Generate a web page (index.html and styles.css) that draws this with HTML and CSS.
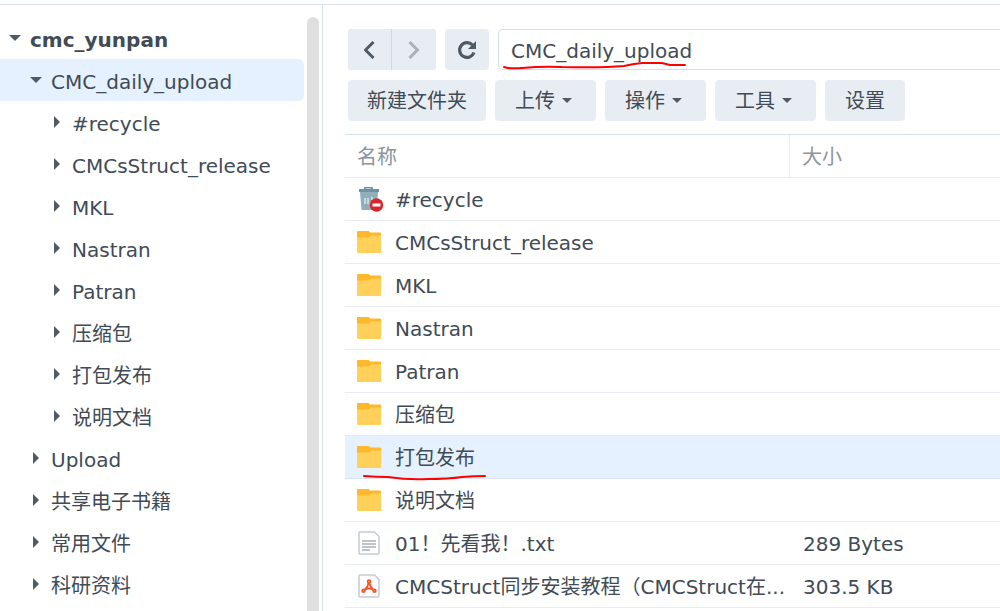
FILE: index.html
```html
<!DOCTYPE html>
<html lang="zh-CN">
<head>
<meta charset="utf-8">
<title>CMC_daily_upload</title>
<link rel="stylesheet" href="styles.css">
</head>
<body>
<svg class="defs" aria-hidden="true">
  <symbol id="folder" viewBox="0 0 24 22"><path fill="#fdb82b" d="M0 1Q0 0 1 0H11.500L13.500 1.500H23Q24 1.500 24 2.500V10H0Z"/><path fill="#ffd05a" d="M0 6.500H12L14 4.500H24V21Q24 22 23 22H1Q0 22 0 21Z"/></symbol>
  <symbol id="bin" viewBox="0 0 24 24" overflow="visible"><path fill="#8fafbb" d="M3 5H21L19.500 23H4.500Z"/><path fill="#6e94a3" d="M2 2H7V1Q7 0 8 0H15Q16 0 16 1V2H22V5H2ZM9 1.500V2H14V1.500Z"/><path stroke="#dbe7ec" stroke-width="1.500" d="M8 11V17M11 11V17M15 10V13"/><circle cx="19.500" cy="18" r="6.700" fill="#d9222a"/><rect x="15.500" y="16.500" width="8" height="3" fill="#fff"/></symbol>
  <symbol id="page" viewBox="0 0 22 24"><path fill="#fff" stroke="#c6cad0" stroke-width="1.500" stroke-linejoin="round" d="M2 1H16.500L21 5.500V22Q21 23 20 23H2Q1 23 1 22V2Q1 1 2 1Z"/></symbol>
  <symbol id="text-file" viewBox="0 0 22 24"><use href="#page"/><path stroke="#aab0b8" stroke-width="1.500" d="M4 10H18M4 13H18M4 16H18M4 19H12"/></symbol>
  <symbol id="pdf-file" viewBox="0 0 22 24"><use href="#page"/><g fill="none" stroke="#f4572b" stroke-width="1.800"><circle cx="11" cy="7.500" r="1.400"/><path d="M10.600 9Q10 13 6.500 16M11.400 9Q12 13 15.500 16M7 15.500Q11 13.500 15 15.500"/><circle cx="5.500" cy="16.800" r="1.300"/><circle cx="16.500" cy="16.800" r="1.300"/></g></symbol>
</svg>
<div class="app">
  <aside class="sidebar">
    <ul class="tree" role="tree">
      <li class="node level-0" role="treeitem" aria-expanded="true"><i class="arrow down"></i><span>cmc_yunpan</span></li>
      <li class="node level-1 selected" role="treeitem" aria-expanded="true" aria-selected="true"><i class="arrow down"></i><span>CMC_daily_upload</span></li>
      <li class="node level-2" role="treeitem"><i class="arrow"></i><span>#recycle</span></li>
      <li class="node level-2" role="treeitem"><i class="arrow"></i><span>CMCsStruct_release</span></li>
      <li class="node level-2" role="treeitem"><i class="arrow"></i><span>MKL</span></li>
      <li class="node level-2" role="treeitem"><i class="arrow"></i><span>Nastran</span></li>
      <li class="node level-2" role="treeitem"><i class="arrow"></i><span>Patran</span></li>
      <li class="node level-2" role="treeitem"><i class="arrow"></i><span>压缩包</span></li>
      <li class="node level-2" role="treeitem"><i class="arrow"></i><span>打包发布</span></li>
      <li class="node level-2" role="treeitem"><i class="arrow"></i><span>说明文档</span></li>
      <li class="node level-1" role="treeitem"><i class="arrow"></i><span>Upload</span></li>
      <li class="node level-1" role="treeitem"><i class="arrow"></i><span>共享电子书籍</span></li>
      <li class="node level-1" role="treeitem"><i class="arrow"></i><span>常用文件</span></li>
      <li class="node level-1" role="treeitem"><i class="arrow"></i><span>科研资料</span></li>
    </ul>
    <div class="scroll-thumb"></div>
  </aside>
  <main class="content">
    <div class="bar">
      <div class="history">
        <button type="button" class="button square" aria-label="后退"><svg width="12" height="18" viewBox="0 0 12 18"><path fill="none" stroke="#505a64" stroke-width="3" d="M9.500 1L1.500 9L9.500 17"/></svg></button>
        <button type="button" class="button square" aria-label="前进" disabled><svg width="12" height="18" viewBox="0 0 12 18"><path fill="none" stroke="#a9b1b9" stroke-width="3" d="M1.500 1L9.500 9L1.500 17"/></svg></button>
      </div>
      <button type="button" class="button square" aria-label="刷新"><svg width="20" height="20" viewBox="0 0 20 20"><path fill="none" stroke="#505a64" stroke-width="3.200" d="M15.500 5A7.400 7.400 0 1 0 17 12.500"/><path fill="#505a64" d="M19 1V9H11Z"/></svg></button>
      <div class="address">
        <input type="text" class="path" aria-label="路径" value="CMC_daily_upload">
        <svg class="mark path-mark" width="190" height="10" viewBox="0 0 190 10"><path d="M2 4Q8 6 20 5Q40 3 60 4Q100 5 122 3Q130 1 140 0L160 0L168 2H183"/></svg>
      </div>
    </div>
    <div class="bar">
      <button type="button" class="button">新建文件夹</button>
      <button type="button" class="button menu">上传<i class="caret"></i></button>
      <button type="button" class="button menu">操作<i class="caret"></i></button>
      <button type="button" class="button menu">工具<i class="caret"></i></button>
      <button type="button" class="button">设置</button>
    </div>
    <table class="files">
      <colgroup><col class="name-column"><col></colgroup>
      <thead><tr><th scope="col">名称</th><th scope="col">大小</th></tr></thead>
      <tbody>
        <tr><td><div class="file"><svg class="icon"><use href="#bin"/></svg><span>#recycle</span></div></td><td></td></tr>
        <tr><td><div class="file"><svg class="icon"><use href="#folder"/></svg><span>CMCsStruct_release</span></div></td><td></td></tr>
        <tr><td><div class="file"><svg class="icon"><use href="#folder"/></svg><span>MKL</span></div></td><td></td></tr>
        <tr><td><div class="file"><svg class="icon"><use href="#folder"/></svg><span>Nastran</span></div></td><td></td></tr>
        <tr><td><div class="file"><svg class="icon"><use href="#folder"/></svg><span>Patran</span></div></td><td></td></tr>
        <tr><td><div class="file"><svg class="icon"><use href="#folder"/></svg><span>压缩包</span></div></td><td></td></tr>
        <tr class="selected"><td><div class="file"><svg class="icon"><use href="#folder"/></svg><span>打包发布</span><svg class="mark row-mark" width="126" height="8" viewBox="0 0 126 8"><path d="M2 2Q14 3 26 3Q46 6 66 5Q86 5 100 3Q112 2 123 2"/></svg></div></td><td></td></tr>
        <tr><td><div class="file"><svg class="icon"><use href="#folder"/></svg><span>说明文档</span></div></td><td></td></tr>
        <tr><td><div class="file"><svg class="icon"><use href="#text-file"/></svg><span>01！先看我！.txt</span></div></td><td>289 Bytes</td></tr>
        <tr><td><div class="file"><svg class="icon"><use href="#pdf-file"/></svg><span>CMCStruct同步安装教程（CMCStruct在...</span></div></td><td>303.5 KB</td></tr>
      </tbody>
    </table>
  </main>
</div>
</body>
</html>
```
FILE: styles.css
```css
* { box-sizing: border-box; }
body {
  margin: 0;
  padding-top: 4px;
  height: 100vh;
  overflow: hidden;
  background: #fff;
  color: #414b55;
  font: 20px/24px Verdana, "DejaVu Sans", "Noto Sans CJK SC", sans-serif;
}
.defs { display: none; }
.app {
  display: flex;
  height: 100%;
  border-top: 1px solid #dce5ee;
}
.sidebar {
  display: flex;
  flex: none;
  gap: 3px;
  padding: 12px 3px 0 0;
  border-right: 1px solid #dce5ee;
}
.tree {
  width: 304px;
  margin: 0;
  padding: 0;
  list-style: none;
}
.node {
  display: flex;
  align-items: center;
  gap: 9px;
  height: 42px;
  padding-top: 4px;
  border-radius: 0 6px 6px 0;
  white-space: nowrap;
}
.node.selected { background: #e5f1fe; }
.level-0 { padding-left: 9px; font-weight: bold; }
.level-1 { padding-left: 30px; }
.level-2 { padding-left: 51px; }
.arrow {
  display: flex;
  flex: none;
  justify-content: center;
  width: 12px;
  margin-bottom: 5px;
}
.arrow::before {
  content: "";
  border: solid transparent;
  border-width: 6px 0 6px 6px;
  border-left-color: #505a64;
}
.arrow.down::before {
  border-width: 6px 6px 0;
  border-color: #505a64 transparent transparent;
}
.scroll-thumb {
  width: 12px;
  border-radius: 6px 6px 0 0;
  background: #dfdfdf;
}
.content {
  flex: 1;
  min-width: 0;
  padding: 24px 0 0 22px;
}
.bar {
  display: flex;
  gap: 9px;
  margin-bottom: 10px;
  padding-left: 3px;
}
.history { display: flex; gap: 1px; background: #cfd8e2; border-radius: 4px; }
.button {
  display: flex;
  align-items: center;
  justify-content: center;
  gap: 7px;
  min-width: 80px;
  height: 41px;
  padding: 0 19px;
  border: 0;
  border-radius: 4px;
  background: #e8edf4;
  color: inherit;
  font: inherit;
  white-space: nowrap;
}
.menu { padding: 0 24px 0 20px; }
.square { width: 44px; min-width: 0; padding: 0; }
.history .button:first-child { width: 43px; border-radius: 4px 0 0 4px; }
.history .button:last-child { border-radius: 0 4px 4px 0; }
.caret {
  border: 5px solid transparent;
  border-top-color: #505a64;
  border-bottom: 0;
}
.address { position: relative; flex: 1; }
.path {
  width: 100%;
  height: 41px;
  padding: 3px 12px 0;
  border: 1px solid #d3dfea;
  border-right: 0;
  border-radius: 5px 0 0 5px;
  outline: 0;
  background: #fff;
  color: inherit;
  font: inherit;
}
.mark {
  position: absolute;
  fill: none;
  stroke: #f00;
  stroke-width: 2;
  stroke-linecap: round;
  overflow: visible;
}
.path-mark { left: 4px; top: 34px; }
.row-mark { left: 5px; top: 29px; }
.files {
  width: 100%;
  margin-top: 13px;
  border-top: 1px solid #d3dfea;
  border-spacing: 0;
  table-layout: fixed;
}
.name-column { width: 445px; }
th, td {
  height: 43px;
  padding: 2px 12px 0;
  border-bottom: 1px solid #e8ecf2;
  text-align: left;
  white-space: nowrap;
}
th { color: #8d949c; font-weight: normal; }
th:first-child { border-right: 1px solid #e8ecf2; }
td:last-child { padding-left: 13px; }
.files .selected td { background: #e5f1fe; border-bottom-color: #d8e5f2; }
.file {
  position: relative;
  display: flex;
  align-items: center;
  gap: 14px;
}
.icon {
  flex: none;
  width: 24px;
  height: 24px;
  margin-bottom: 2px;
  overflow: visible;
}
```
